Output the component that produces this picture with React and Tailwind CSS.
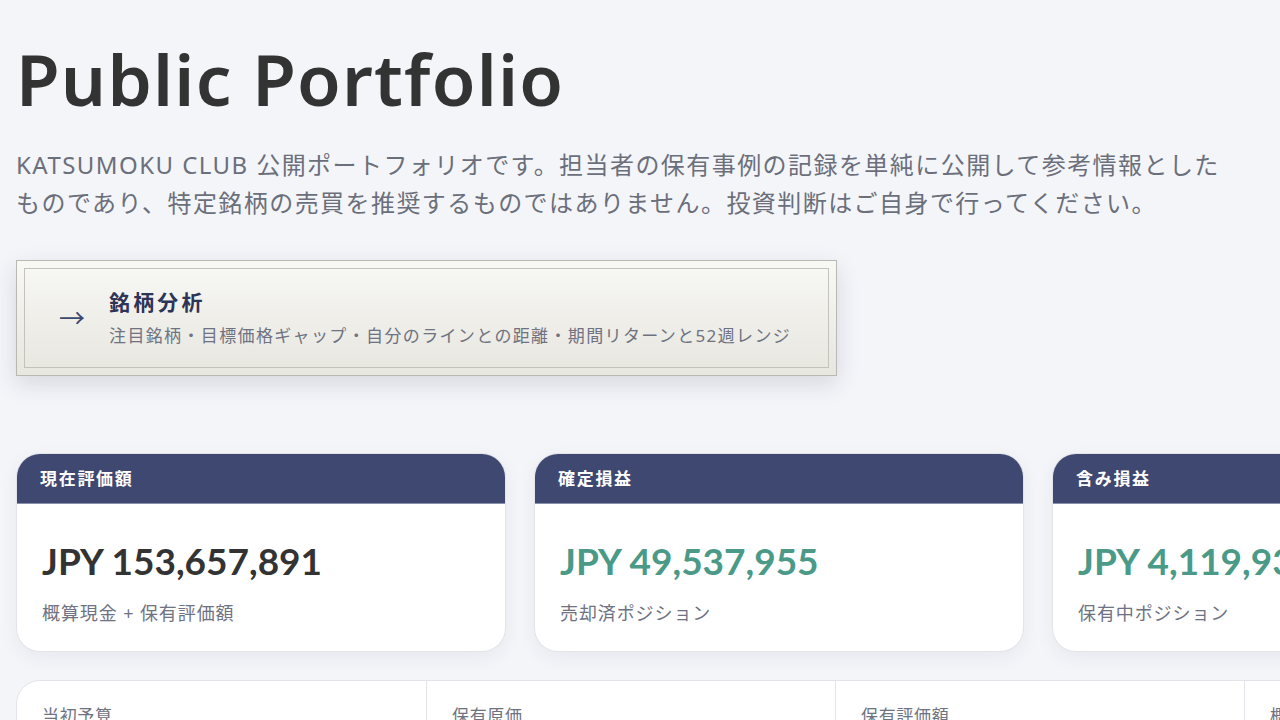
import React from 'react';

const summary = [
  { title: '現在評価額', value: 'JPY 153,657,891', note: '概算現金 + 保有評価額', tone: 'text-[#333333]' },
  { title: '確定損益', value: 'JPY 49,537,955', note: '売却済ポジション', tone: 'text-[#4a9a87]' },
  { title: '含み損益', value: 'JPY 4,119,936', note: '保有中ポジション', tone: 'text-[#4a9a87]' },
];

const breakdown = ['当初予算', '保有原価', '保有評価額', '概算現金'];

const round = { fontFamily: '"Lato", "Noto Sans", sans-serif' };
const heading = { fontFamily: '"Noto Sans", "Lato", sans-serif' };
const jp = { fontFamily: '"Noto Sans", "Noto Sans CJK JP", sans-serif' };

export default function App() {
  return (
    <div className="h-[720px] w-[1280px] overflow-hidden bg-[#f4f5f9]" style={jp}>
      <div className="px-4 pt-[34px]">
        <h1 className="text-[71px] font-semibold leading-[90px] tracking-[0.017em] text-[#333333]" style={heading}>
          Public Portfolio
        </h1>

        <p className="mt-[22px] w-[1222px] text-[24px] leading-[38px] tracking-[0.06em] text-[#6b6f7b]">
          KATSUMOKU CLUB 公開ポートフォリオです。担当者の保有事例の記録を単純に公開して参考情報としたものであり、特定銘柄の売買を推奨するものではありません。投資判断はご自身で行ってください。
        </p>

        {/* analysis link tile */}
        <a
          href="#"
          className="mt-[38px] block w-[821px] border border-[#b9b9b1] bg-gradient-to-b from-[#f8f8f5] to-[#e7e6df] p-[7px] shadow-[0_8px_22px_rgba(40,44,70,0.14)]"
        >
          <div className="flex items-center gap-[24px] border border-[#c4c3bb] px-[34px] py-[18px]">
            <span className="text-[26px] leading-none text-[#3f4870]">→</span>
            <div>
              <div className="text-[21px] font-bold leading-[30px] tracking-[0.15em] text-[#2d3458]">銘柄分析</div>
              <div className="mt-[6px] text-[17px] leading-[26px] tracking-[0.08em] text-[#6e7282]">
                注目銘柄・目標価格ギャップ・自分のラインとの距離・期間リターンと52週レンジ
              </div>
            </div>
          </div>
        </a>

        {/* headline figures */}
        <div className="mt-[77px] flex gap-[28px]">
          {summary.map((card) => (
            <div
              key={card.title}
              className="w-[490px] shrink-0 overflow-hidden rounded-[24px] border border-[#e3e4ea] bg-white shadow-[0_6px_18px_rgba(40,44,70,0.06)]"
            >
              <div className="flex h-[50px] items-center border-b border-[#8a90a8] bg-[#3f4870] px-[23px] text-[17px] font-bold tracking-[0.1em] text-white">
                {card.title}
              </div>
              <div className="px-[25px] pb-[24px] pt-[33px]">
                <div className={`text-[37px] font-bold leading-[48px] ${card.tone}`} style={round}>
                  {card.value}
                </div>
                <div className="mt-[14px] text-[18px] leading-[28px] tracking-[0.05em] text-[#6e7282]">{card.note}</div>
              </div>
            </div>
          ))}
        </div>

        {/* cost breakdown strip */}
        <div className="mt-[28px] flex w-[1636px] rounded-[24px] border border-[#e3e4ea] bg-white">
          {breakdown.map((label, i) => (
            <div
              key={label}
              className={`w-[409px] shrink-0 px-[25px] pt-[22px] pb-[40px] ${i > 0 ? 'border-l border-[#e3e4ea]' : ''}`}
            >
              <div className="text-[17px] tracking-[0.04em] text-[#6e7282]">{label}</div>
            </div>
          ))}
        </div>
      </div>
    </div>
  );
}
